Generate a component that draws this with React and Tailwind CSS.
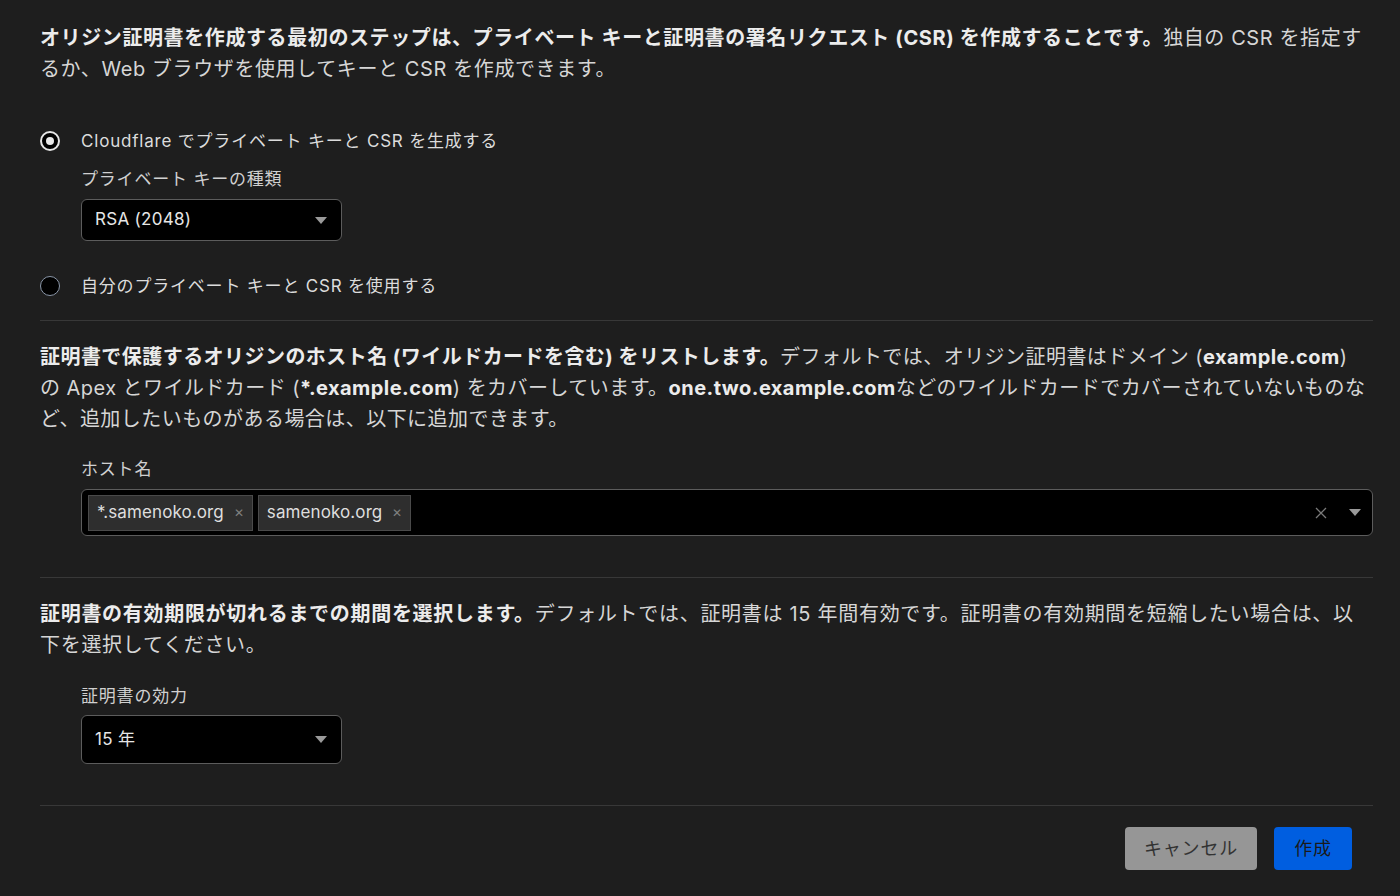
import React from 'react';

const font = { fontFamily: 'Inter, "Noto Sans CJK JP", "Noto Sans", sans-serif' };

function Caret() {
  return (
    <svg width="12" height="7" viewBox="0 0 12 7" className="shrink-0">
      <path d="M0 0 L12 0 L6 7 Z" fill="#9a9a9a" />
    </svg>
  );
}

function Radio({ checked, children }) {
  return (
    <div className="flex items-center gap-[21px]">
      <span
        className={`w-[20px] h-[20px] rounded-full flex items-center justify-center bg-black ${
          checked ? 'border-[2px] border-[#e5e5e5]' : 'border border-[#8a96a8]'
        }`}
      >
        {checked && <span className="w-[8px] h-[8px] rounded-full bg-[#e8e8e8]" />}
      </span>
      <span className="text-[17px] tracking-[0.8px] leading-[24px] text-[#dcdcdc]">{children}</span>
    </div>
  );
}

function Select({ value, h }) {
  return (
    <div
      className={`w-[261px] ${h} flex items-center justify-between pl-[13px] pr-[14px] bg-black border border-[#5c5c5c] rounded-[6px]`}
    >
      <span className="text-[17px] tracking-[0.3px] text-[#e6e6e6]">{value}</span>
      <Caret />
    </div>
  );
}

function Tag({ label }) {
  return (
    <div className="h-[36px] flex items-center gap-[10px] pl-[8px] pr-[8px] bg-[#2e2e2e] border border-[#4a4a4a]">
      <span className="text-[17px] tracking-[0.1px] text-[#dedede]">{label}</span>
      <span className="text-[12px] text-[#808080] leading-none">✕</span>
    </div>
  );
}

const B = ({ children }) => <b className="font-bold text-[#ececec]">{children}</b>;

const label = 'text-[17px] tracking-[0.8px] text-[#d0d0d0] leading-[24px]';

export default function App() {
  return (
    <div className="min-h-[896px] w-[1400px] bg-[#1e1e1e] text-[#d9d9d9] pl-[40px] pr-[27px]" style={font}>
      <p className="pt-[23px] text-[20px] tracking-[0.6px] leading-[31px] text-[#d6d6d6]">
        <B>
          オリジン証明書を作成する最初のステップは、プライベート キーと証明書の署名リクエスト (CSR) を作成することです。
        </B>
        独自の CSR を指定するか、Web ブラウザを使用してキーと CSR を作成できます。
      </p>

      <div className="pt-[44px] pb-[22px] border-b border-[#383838]">
        <Radio checked>Cloudflare でプライベート キーと CSR を生成する</Radio>
        <div className="pl-[41px] pt-[14px]">
          <div className={label}>プライベート キーの種類</div>
          <div className="pt-[8px]">
            <Select value="RSA (2048)" h="h-[42px]" />
          </div>
        </div>
        <div className="pt-[33px]">
          <Radio>自分のプライベート キーと CSR を使用する</Radio>
        </div>
      </div>

      <p className="pt-[21px] text-[20px] tracking-[0.45px] leading-[31px] text-[#d6d6d6]">
        <B>証明書で保護するオリジンのホスト名 (ワイルドカードを含む) をリストします。</B>
        デフォルトでは、オリジン証明書はドメイン (<B>example.com</B>) の Apex とワイルドカード (<B>*.example.com</B>) をカバーしています。
        <B>one.two.example.com</B>
        などのワイルドカードでカバーされていないものなど、追加したいものがある場合は、以下に追加できます。
      </p>

      <div className="pl-[41px] pt-[22px] pb-[41px] border-b border-[#383838]">
        <div className={label}>ホスト名</div>
        <div className="mt-[8px] h-[47px] flex items-center bg-black border border-[#5c5c5c] rounded-[6px] pl-[6px] pr-[11px]">
          <div className="flex gap-[5px] flex-1">
            <Tag label="*.samenoko.org" />
            <Tag label="samenoko.org" />
          </div>
          <svg width="12" height="12" viewBox="0 0 12 12" className="mr-[22px]">
            <path d="M1 1 L11 11 M11 1 L1 11" stroke="#7a7a7a" strokeWidth="1.3" />
          </svg>
          <Caret />
        </div>
      </div>

      <p className="pt-[21px] text-[20px] tracking-[0.7px] leading-[31px] text-[#d6d6d6]">
        <B>証明書の有効期限が切れるまでの期間を選択します。</B>
        デフォルトでは、証明書は 15 年間有効です。証明書の有効期間を短縮したい場合は、以下を選択してください。
      </p>

      <div className="pl-[41px] pt-[23px] pb-[41px] border-b border-[#383838]">
        <div className={label}>証明書の効力</div>
        <div className="pt-[7px]">
          <Select value="15 年" h="h-[49px]" />
        </div>
      </div>

      <div className="flex justify-end gap-[17px] pt-[21px] pr-[21px]">
        <button className="h-[43px] w-[132px] rounded-[4px] bg-[#969696] text-[18px] tracking-[0.8px] text-[#333333]">
          キャンセル
        </button>
        <button className="h-[43px] w-[78px] rounded-[4px] bg-[#005ee0] text-[18px] tracking-[0.8px] text-[#1a1a1a]">
          作成
        </button>
      </div>
    </div>
  );
}
